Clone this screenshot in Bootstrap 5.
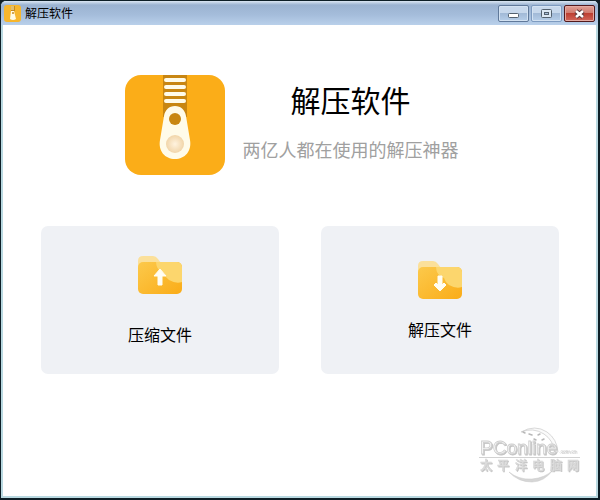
<!DOCTYPE html>
<html lang="zh-CN">
<head>
<meta charset="utf-8">
<meta name="viewport" content="width=device-width, initial-scale=1">
<title>解压软件</title>
<link href="https://cdn.jsdelivr.net/npm/bootstrap@5.3.0/dist/css/bootstrap.min.css" rel="stylesheet">
<style>
  body { font-family: "Liberation Sans", "Noto Sans CJK SC", sans-serif; background: #101c24; color: #000; }
  .app-window { border: 1px solid #0e1f27; border-width: 1px 2px 2px 1px; border-radius: 6px 6px 0 0; background: #b9d9e1; overflow: hidden; padding: 0 2px 2px; }
  .title-bar { height: 24px; padding: 1px 3px 0 3px; background: linear-gradient(#dbe7f3 0, #9bb3d1 4px, #a5bddb 14px, #b9d0ea 100%); margin: 0 -2px; }
  .title-text { font-size: 12px; line-height: 20px; font-weight: 400; }
  .win-btn { width: 31px; height: 17px; border: 1px solid #60799a; border-radius: 2px; background: linear-gradient(#c7d8ec 0 46%, #a2bad7 50%, #b6cee9); box-shadow: inset 0 0 0 1px #d3e2f2; }
  .win-btn.dim { border-color: #7e9bc0; }
  .win-btn.close-btn { border-color: #52191c; background: linear-gradient(#e0a096 0, #d17a6e 46%, #bd3f32 50%, #d2665a); box-shadow: inset 0 0 0 1px #e5aaa2; }
  .controls { gap: 2px; }
  .client { background: #fff; padding: 50px 37px 0 38px; }
  .hero { gap: 18px; padding-right: 17px; margin-bottom: 51px; }
  .hero-title { font-size: 30px; line-height: 40px; margin: 7px 0 17px; font-weight: 400; }
  .hero-sub { font-size: 18px; line-height: 24px; color: #a0a0a0; font-weight: 400; }
  .actions { gap: 42px; }
  .action-tile { height: 148px; background: #eff1f5; border-radius: 7px; color: #000; font-size: 16px; line-height: 24px; }
  .action-tile svg { margin: 30px 0; }
  .action-tile.tight svg { margin: 35px 0 20px; }
  .action-tile:hover { background: #e6e9f0; }
  .brand-stamp { right: 10px; bottom: 12px; }
  .brand-stamp text { filter: drop-shadow(1px 1px 0 #c4c4c4); }
</style>
<script src="https://cdn.jsdelivr.net/npm/bootstrap@5.3.0/dist/js/bootstrap.bundle.min.js"></script>
</head>
<body>
<svg width="0" height="0" class="position-absolute" aria-hidden="true">
  <defs>
    <linearGradient id="fold" x1="0" y1="0" x2="1" y2="1"><stop offset="0" stop-color="#fcc94b"/><stop offset="1" stop-color="#faac18"/></linearGradient>
    <radialGradient id="knob"><stop offset="0" stop-color="#fff3df"/><stop offset="1" stop-color="#f1d5a9"/></radialGradient>
    <clipPath id="foldClip"><rect y="6" width="44" height="32" rx="5"/></clipPath>
    <symbol id="folder" viewBox="0 0 44 38">
      <path d="M0 14V5Q0 0 5 0H15Q18 0 20 3L23 7V14Z" fill="#fbe09a"/>
      <rect y="6" width="44" height="32" rx="5" fill="url(#fold)"/>
      <g clip-path="url(#foldClip)"><path d="M18 5H44V26Q38 28 31 24Q27 21 26 17Q21 15 19 11Q18 8 18 5Z" fill="#fcd66d"/></g>
    </symbol>
    <symbol id="zip" viewBox="0 0 100 100">
      <rect width="100" height="100" rx="16" fill="#fbad18"/>
      <path d="M38 0H62V42H38Z" fill="#c88612"/>
      <path d="M41 5H59M41 12H59M41 19H59M41 26H59" stroke="#fffbe9" stroke-width="4" stroke-linecap="round"/>
      <path d="M50 31C44 31 40 35 39 41L35 65C33 76 40 84 50 84S67 76 65 65L61 41C60 35 56 31 50 31Z" fill="#fffbe9"/>
      <circle cx="50" cy="44" r="6" fill="#c88612"/>
      <circle cx="50" cy="69" r="9" fill="url(#knob)"/>
    </symbol>
  </defs>
</svg>
<div class="app-window min-vh-100 d-flex flex-column position-relative">
  <header class="title-bar d-flex align-items-center flex-shrink-0">
    <svg class="me-1" width="17" height="17" viewBox="0 0 17 17" aria-hidden="true">
      <rect width="17" height="17" rx="3" fill="#f7b62c"/><path d="M7 1H11V6H7Z" fill="#c48a22"/><path d="M7 2H10M7 4H10" stroke="#fff2b9"/><path d="M7 6H10L12 14Q9 16 6 14Z" fill="#fffbe5"/><circle cx="9" cy="8" r="1" fill="#c48a22"/>
    </svg>
    <span class="title-text me-auto">解压软件</span>
    <div class="controls d-flex">
      <button type="button" class="win-btn p-0 d-flex align-items-center justify-content-center" aria-label="最小化"><svg width="12" height="9" viewBox="0 0 12 9"><rect x=".5" y="4.500" width="10" height="4" rx="1" fill="#fff" stroke="#53616f"/></svg></button>
      <button type="button" class="win-btn dim p-0 d-flex align-items-center justify-content-center" aria-label="最大化"><svg width="12" height="9" viewBox="0 0 12 9"><rect x=".5" y=".5" width="10" height="8" rx="1" fill="#dce8f4" stroke="#53616f"/><rect x="3.500" y="3.500" width="4" height="2" fill="#a8bfda" stroke="#53616f"/></svg></button>
      <button type="button" class="win-btn close-btn p-0 d-flex align-items-center justify-content-center" aria-label="关闭"><svg width="13" height="10" viewBox="0 0 13 10"><path d="M3 2L10 8M10 2L3 8" stroke="#5a3538" stroke-width="4.500"/><path d="M3 2L10 8M10 2L3 8" stroke="#fff" stroke-width="2.500"/></svg></button>
    </div>
  </header>
  <main class="client flex-grow-1">
    <section class="hero d-flex justify-content-center">
      <svg width="100" height="100" class="flex-shrink-0" role="img" aria-label="解压软件"><use href="#zip"/></svg>
      <div class="text-center">
        <h1 class="hero-title">解压软件</h1>
        <p class="hero-sub mb-0">两亿人都在使用的解压神器</p>
      </div>
    </section>
    <section class="actions d-flex">
      <button type="button" class="action-tile border-0 p-0 flex-fill w-50 d-flex flex-column align-items-center">
        <svg width="44" height="38" viewBox="0 0 44 38" aria-hidden="true"><use href="#folder"/><path d="M22 13L28 20H24V29H20V20H16Z" fill="#fffdf2" stroke="#fffdf2" stroke-linejoin="round"/></svg>
        <span>压缩文件</span>
      </button>
      <button type="button" class="action-tile tight border-0 p-0 flex-fill w-50 d-flex flex-column align-items-center">
        <svg width="44" height="38" viewBox="0 0 44 38" aria-hidden="true"><use href="#folder"/><path d="M22 30L28 24L26 22L24 24V15H20V24L18 22L16 24Z" fill="#fffdf2" stroke="#fffdf2" stroke-linejoin="round"/></svg>
        <span>解压文件</span>
      </button>
    </section>
  </main>
  <svg class="brand-stamp position-absolute" width="110" height="60" viewBox="0 0 110 60" role="img" aria-label="PConline 太平洋电脑网">
    <path d="M43 6Q57 -2 69 6Q79 13 80 26H77Q75 14 66 8Q55 1 43 6Z" fill="#fafafa" stroke="#c9c9c9" stroke-width=".7"/>
    <path d="M31 46Q41 54 54 53Q67 52 75 44Q66 56 54 56Q40 56 31 46Z" fill="#d6d6d6" stroke="#c9c9c9" stroke-width=".5"/>
    <path d="M45 6L47 7M51 8L54 9M60 9L62 8M56 13L58 14M64 14L66 13" stroke="#b8b8b8" stroke-width="1.500" stroke-linecap="round"/>
    <path d="M1 31.500H102" stroke="#d2d2d2"/>
    <g font-family="Liberation Sans, Noto Sans CJK SC, sans-serif">
      <text x="2" y="28" font-size="19" fill="#f8f8f8" stroke="#cfcfcf" stroke-width=".8">PConline</text>
      <text x="81" y="27" font-size="5" fill="#d2d2d2">.com.cn</text>
      <text y="44" font-size="12" font-weight="500" fill="#dedede" stroke="#d4d4d4" stroke-width=".4" x="2 19 37 54 72 89">太平洋电脑网</text>
    </g>
  </svg>
</div>
</body>
</html>
